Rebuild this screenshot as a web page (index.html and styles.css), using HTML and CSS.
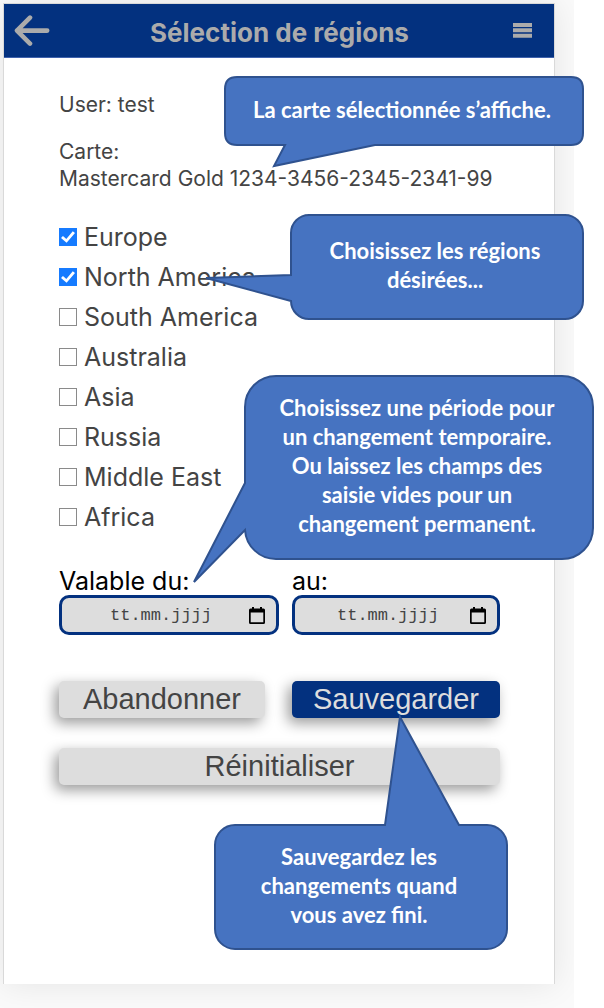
FILE: index.html
```html
<!DOCTYPE html>
<html lang="fr">
<head>
<meta charset="utf-8">
<meta name="viewport" content="width=device-width, initial-scale=1">
<title>Sélection de régions</title>
<link rel="stylesheet" href="styles.css">
</head>
<body>
<div class="stage">
  <main class="card">
    <header class="bar">
      <button class="icon-button" type="button" aria-label="Retour">
        <svg width="36" height="32" viewBox="0 0 36 32" fill="none" stroke="#ababab" stroke-width="4.6" stroke-linecap="round" stroke-linejoin="round"><path d="M16 2.600 3 15.600 16 28.600M3 15.600H33.200"/></svg>
      </button>
      <h1 class="title">Sélection de régions</h1>
      <button class="icon-button" type="button" aria-label="Menu">
        <svg width="19" height="15" viewBox="0 0 19 15" fill="#ababab"><path d="M0 0h19v4H0zM0 5.300h19v4H0zM0 10.700h19v4H0z"/></svg>
      </button>
    </header>
    <form class="content">
      <section class="details">
        <p class="line">User: test</p>
        <p class="line">Carte:<br>Mastercard Gold 1234-3456-2345-2341-99</p>
      </section>
      <div class="regions">
        <label class="region"><input class="check" type="checkbox" checked>Europe</label>
        <label class="region"><input class="check" type="checkbox" checked>North America</label>
        <label class="region"><input class="check" type="checkbox">South America</label>
        <label class="region"><input class="check" type="checkbox">Australia</label>
        <label class="region"><input class="check" type="checkbox">Asia</label>
        <label class="region"><input class="check" type="checkbox">Russia</label>
        <label class="region"><input class="check" type="checkbox">Middle East</label>
        <label class="region"><input class="check" type="checkbox">Africa</label>
      </div>
      <div class="pair">
        <div class="field">
          <label class="field-label" for="from">Valable du:</label>
          <div class="date">
            <input class="date-input" id="from" type="text" placeholder="tt.mm.jjjj">
            <button class="picker" type="button" aria-label="Choisir la date de début">
              <svg width="16" height="17" viewBox="0 0 16 17"><path fill="#000" fill-rule="evenodd" d="M3 0h2v1.500h6V0h2v1.500h1.500q1.500 0 1.500 1.500v12.500q0 1.500-1.500 1.500h-13Q0 17 0 15.500V3q0-1.500 1.500-1.500H3zM1.700 5.500v9.800h12.600V5.500z"/></svg>
            </button>
          </div>
        </div>
        <div class="field">
          <label class="field-label" for="to">au:</label>
          <div class="date">
            <input class="date-input" id="to" type="text" placeholder="tt.mm.jjjj">
            <button class="picker" type="button" aria-label="Choisir la date de fin">
              <svg width="16" height="17" viewBox="0 0 16 17"><path fill="#000" fill-rule="evenodd" d="M3 0h2v1.500h6V0h2v1.500h1.500q1.500 0 1.500 1.500v12.500q0 1.500-1.500 1.500h-13Q0 17 0 15.500V3q0-1.500 1.500-1.500H3zM1.700 5.500v9.800h12.600V5.500z"/></svg>
            </button>
          </div>
        </div>
      </div>
      <div class="pair actions">
        <button class="action cancel" type="button">Abandonner</button>
        <button class="action save" type="button">Sauvegarder</button>
        <button class="action reset" type="reset">Réinitialiser</button>
      </div>
    </form>
  </main>
</div>

<aside class="callout note-card">
  <svg class="bubble" viewBox="0 0 360 70"><path d="M13 1H347Q359 1 359 13V57Q359 69 347 69H151L50 90 61 69H13Q1 69 1 57V13Q1 1 13 1Z"/></svg>
  <p class="note">La carte sélectionnée s’affiche.</p>
</aside>
<aside class="callout note-regions">
  <svg class="bubble" viewBox="0 0 294 106"><path d="M19 1H275A18 18 0 0 1 293 19V87A18 18 0 0 1 275 105H19A18 18 0 0 1 1 87L-84 64 1 61V19A18 18 0 0 1 19 1Z"/></svg>
  <p class="note">Choisissez les régions<br>désirées...</p>
</aside>
<aside class="callout note-period">
  <svg class="bubble" viewBox="0 0 350 185"><path d="M32 1H318A31 31 0 0 1 349 32V153A31 31 0 0 1 318 184H32A31 31 0 0 1 1 155L-50 207 1 108V32A31 31 0 0 1 32 1Z"/></svg>
  <p class="note">Choisissez une période pour<br>un changement temporaire.<br>Ou laissez les champs des<br>saisie vides pour un<br>changement permanent.</p>
</aside>
<aside class="callout note-save">
  <svg class="bubble" viewBox="0 0 294 126"><path d="M21 1H171L186-107 245 1H273A20 20 0 0 1 293 21V105A20 20 0 0 1 273 125H21A20 20 0 0 1 1 105V21A20 20 0 0 1 21 1Z"/></svg>
  <p class="note">Sauvegardez les<br>changements quand<br>vous avez fini.</p>
</aside>
</body>
</html>
```
FILE: styles.css
```css
* { box-sizing: border-box; }

body {
  position: relative;
  margin: 0;
  background: #fff;
  color: #444;
  font-family: Inter, "Liberation Sans", sans-serif;
}

h1, p { margin: 0; }

button {
  border: 0;
  padding: 0;
  background: none;
  cursor: pointer;
}

svg { display: block; }

.stage {
  display: flow-root;
  margin-right: 30px;
  padding: 3px 19px 24px 3px;
  min-height: 100vh;
  overflow: hidden;
  background: #fafafa;
}

.card {
  min-height: calc(100vh - 27px);
  border: 1px solid #d9d9d9;
  border-bottom: 0;
  background: #fff;
  box-shadow: 0 0 32px rgba(0, 0, 0, 0.09);
}

.bar {
  display: flex;
  align-items: center;
  justify-content: space-between;
  height: 54px;
  padding: 0 22px 0 10px;
  border-bottom: 1px solid #3f62ad;
  background: #03317f;
}

.title {
  color: #ababab;
  font-size: 26px;
  line-height: 32px;
  padding: 4px 4px 0 0;
}

.content { padding: 33px 54px 32px 55px; }

.details {
  display: grid;
  gap: 20px;
  font-size: 21px;
  line-height: 27px;
}

.regions {
  display: grid;
  margin-top: 25px;
  font-size: 25px;
  line-height: 40px;
}

.region {
  display: flex;
  align-items: center;
  gap: 7px;
}

.check {
  appearance: none;
  display: grid;
  place-items: center;
  width: 18px;
  height: 18px;
  margin: 0;
  border: 1px solid #8a8a8a;
  background: #fff;
}

.check:checked {
  border-color: #167bff;
  background: #167bff;
}

.check:checked::after {
  content: "";
  width: 14px;
  height: 12px;
  background: #fff;
  clip-path: polygon(0 58%, 14% 42%, 38% 66%, 84% 2%, 100% 16%, 40% 98%);
}

.pair {
  display: grid;
  grid-template-columns: minmax(0, 220fr) minmax(0, 208fr);
  column-gap: 13px;
  margin-top: 30px;
}

.field-label {
  display: block;
  color: #000;
  font-size: 25px;
  line-height: 28px;
}

.date {
  display: flex;
  align-items: center;
  height: 40px;
  padding: 0 11px;
  border: 3px solid #03317f;
  border-radius: 10px;
  background: #ddd;
}

.date-input {
  flex: 1;
  min-width: 0;
  border: 0;
  padding: 0;
  background: none;
  color: #444;
  font-family: "Liberation Mono", monospace;
  font-size: 17px;
  text-align: center;
}

.date-input::placeholder { color: #444; }

.actions {
  row-gap: 30px;
  margin-top: 46px;
}

.action {
  height: 37px;
  border-radius: 5px;
  background: #ddd;
  box-shadow: -4px 5px 14px rgba(0, 0, 0, 0.4);
  color: #444;
  font-family: "Liberation Sans", Arial, sans-serif;
  font-size: 29px;
  line-height: 37px;
}

.cancel { margin-right: 14px; }

.save {
  background: #03317f;
  color: #ddd;
}

.reset { grid-column: 1 / -1; }

/* Speech bubbles laid over the screen */
.callout {
  position: absolute;
  display: grid;
  place-items: center;
  padding: 0 4px 4px 0;
}

.bubble {
  position: absolute;
  inset: 0;
  width: 100%;
  height: 100%;
  overflow: visible;
  fill: #4673c1;
  stroke: #2f528f;
  stroke-width: 2;
}

.note {
  position: relative;
  color: #fff;
  font-family: Lato, "Liberation Sans", sans-serif;
  font-size: 22px;
  font-weight: 700;
  line-height: 29px;
  text-align: center;
  white-space: nowrap;
}

.note-card { left: 224px; top: 76px; width: 360px; height: 70px; }
.note-regions { left: 290px; top: 214px; width: 294px; height: 106px; }
.note-period { left: 244px; top: 375px; width: 350px; height: 185px; }
.note-save { left: 214px; top: 824px; width: 294px; height: 126px; }
```
